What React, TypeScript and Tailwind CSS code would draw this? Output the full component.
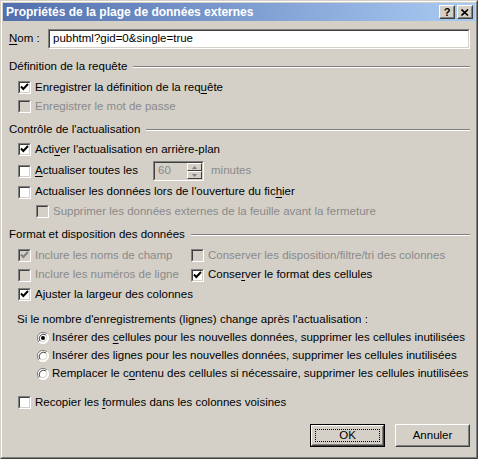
import React from "react";

const sunken =
  "border border-t-[#808080] border-l-[#808080] border-r-white border-b-white";
const sunkenInner =
  "border border-t-[#404040] border-l-[#404040] border-r-[#d4d0c8] border-b-[#d4d0c8]";
const raised =
  "border border-t-white border-l-white border-r-[#404040] border-b-[#404040]";
const raisedInner =
  "border border-t-[#d4d0c8] border-l-[#d4d0c8] border-r-[#808080] border-b-[#808080]";

const Check = ({ checked, disabled }: { checked?: boolean; disabled?: boolean }) => (
  <div className={`w-[13px] h-[13px] shrink-0 ${sunken}`}>
    <div className={`w-full h-full ${sunkenInner} ${disabled ? "bg-[#d4d0c8]" : "bg-white"} flex items-center justify-center`}>
      {checked && (
        <svg width="9" height="9" viewBox="0 0 9 9">
          <path d="M1 3.5 L3.3 6 L8 1" fill="none" stroke={disabled ? "#808080" : "#000"} strokeWidth="1.9" />
        </svg>
      )}
    </div>
  </div>
);

const Radio = ({ checked }: { checked?: boolean }) => (
  <svg width="12" height="12" viewBox="0 0 12 12" className="shrink-0">
    <circle cx="6" cy="6" r="5.5" fill="#fff" />
    <path d="M10 2 A5.5 5.5 0 0 0 2 10" fill="none" stroke="#808080" strokeWidth="1" />
    <path d="M2 10 A5.5 5.5 0 0 0 10 2" fill="none" stroke="#fff" strokeWidth="1" />
    <path d="M9 3 A4.3 4.3 0 0 0 3 9" fill="none" stroke="#404040" strokeWidth="1" />
    <path d="M3 9 A4.3 4.3 0 0 0 9 3" fill="none" stroke="#d4d0c8" strokeWidth="1" />
    {checked && <circle cx="6" cy="6" r="2" fill="#000" />}
  </svg>
);

const U = ({ children }: { children: React.ReactNode }) => <span className="underline underline-offset-2">{children}</span>;

const Group = ({ title }: { title: string }) => (
  <div className="flex items-center h-4 pl-[6px]">
    <span>{title}</span>
    <div className="flex-1 ml-[6px] border-t border-t-[#808080] border-b border-b-white" />
  </div>
);

const Row = ({
  checked,
  disabled,
  indent = "pl-[15px]",
  h = "h-[19px]",
  children,
}: {
  checked?: boolean;
  disabled?: boolean;
  indent?: string;
  h?: string;
  children: React.ReactNode;
}) => (
  <div className={`flex items-center gap-1 whitespace-nowrap ${indent} ${h} ${disabled ? "text-[#8a8a8a]" : ""}`}>
    <Check checked={checked} disabled={disabled} />
    <span>{children}</span>
  </div>
);

const RadioRow = ({ checked, children }: { checked?: boolean; children: React.ReactNode }) => (
  <div className="flex items-center gap-[3px] pl-[34px] h-[18px] whitespace-nowrap">
    <Radio checked={checked} />
    <span>{children}</span>
  </div>
);

export default function App() {
  return (
    <div className="w-[478px] h-[459px] bg-[#d4d0c8] border border-t-[#d4d0c8] border-l-[#d4d0c8] border-r-[#404040] border-b-[#404040] font-['Liberation_Sans',sans-serif] text-[11.5px] text-black">
      <div className="w-full h-full border border-t-white border-l-white border-r-[#808080] border-b-[#808080] p-px flex flex-col">
        <div className="h-[18px] flex items-center justify-between bg-gradient-to-r from-[#526fae] to-[#a9cbf2] pl-[3px] pr-[2px]">
          <span className="text-white font-bold text-[12px]">Propriétés de la plage de données externes</span>
          <div className="flex gap-[2px]">
            <div className={`w-4 h-[14px] bg-[#d4d0c8] ${raised}`}>
              <div className={`w-full h-full ${raisedInner} flex items-center justify-center font-bold text-[11px] leading-none`}>?</div>
            </div>
            <div className={`w-4 h-[14px] bg-[#d4d0c8] ${raised}`}>
              <div className={`w-full h-full ${raisedInner} flex items-center justify-center`}>
                <svg width="8" height="7" viewBox="0 0 8 7">
                  <path d="M0.5 0.5 L7 6.5 M7 0.5 L0.5 6.5" stroke="#000" strokeWidth="1.6" />
                </svg>
              </div>
            </div>
          </div>
        </div>

        <div className="flex flex-col pr-[5px]">
          <div className="flex items-center mt-2 h-5 pl-[6px]">
            <span className="w-[39px]"><U>N</U>om :</span>
            <div className={`flex-1 h-5 ${sunken}`}>
              <div className={`w-full h-full ${sunkenInner} bg-white flex items-center px-[3px]`}>pubhtml?gid=0&amp;single=true</div>
            </div>
          </div>

          <div className="mt-[10px]"><Group title="Définition de la requête" /></div>
          <div className="mt-[3px]">
            <Row checked>Enregistrer la définition de la req<U>u</U>ête</Row>
          </div>
          <Row disabled>Enregistrer le mot de passe</Row>

          <div className="mt-[6px]"><Group title="Contrôle de l'actualisation" /></div>
          <div className="mt-[2px]">
            <Row checked>Acti<U>v</U>er l'actualisation en arrière-plan</Row>
          </div>
          <div className="flex items-center gap-1 pl-[15px] h-[22px] mt-px whitespace-nowrap">
            <Check />
            <span className="w-[114px]"><U>A</U>ctualiser toutes les</span>
            <div className={`w-[51px] h-5 ${sunken}`}>
              <div className={`w-full h-full ${sunkenInner} flex items-center`}>
                <span className="flex-1 pl-[3px] text-[#8a8a8a]">60</span>
                <div className="w-[15px] h-full flex flex-col">
                  <div className={`flex-1 bg-[#d4d0c8] ${raised} flex items-center justify-center`}>
                    <svg width="5" height="3" viewBox="0 0 5 3"><path d="M2.5 0 L5 3 L0 3Z" fill="#808080" /></svg>
                  </div>
                  <div className={`flex-1 bg-[#d4d0c8] ${raised} flex items-center justify-center`}>
                    <svg width="5" height="3" viewBox="0 0 5 3"><path d="M0 0 L5 0 L2.5 3Z" fill="#808080" /></svg>
                  </div>
                </div>
              </div>
            </div>
            <span className="ml-[3px] text-[#8a8a8a]">minutes</span>
          </div>
          <Row h="h-5">Actualiser les données lors de l'ouverture du fic<U>h</U>ier</Row>
          <Row disabled indent="pl-[33px]">Supprimer les données externes de la feuille avant la fermeture</Row>

          <div className="mt-[6px]"><Group title="Format et disposition des données" /></div>
          <div className="grid grid-cols-[188px_1fr] mt-[3px]">
            <Row checked disabled>Inclure les noms de champ</Row>
            <Row disabled indent="pl-0">Conserver les disposition/filtre/tri des colonnes</Row>
            <Row disabled h="h-5">Inclure les numéros de ligne</Row>
            <Row checked indent="pl-0" h="h-5">Conse<U>r</U>ver le format des cellules</Row>
            <Row checked>A<U>j</U>uster la largeur des colonnes</Row>
          </div>

          <div className="mt-[8px] h-4 flex items-center pl-[14px] whitespace-nowrap">
            Si le nombre d'enregistrements (lignes) change après l'actualisation :
          </div>
          <div className="mt-px">
            <RadioRow checked>Insérer des <U>c</U>ellules pour les nouvelles données, supprimer les cellules inutilisées</RadioRow>
            <RadioRow>Insérer des lignes pour les nouvelles données, supprimer les cellules inutilisées</RadioRow>
            <RadioRow>Remplacer le c<U>o</U>ntenu des cellules si nécessaire, supprimer les cellules inutilisées</RadioRow>
          </div>

          <div className="mt-[10px]">
            <Row>Recopier les <U>f</U>ormules dans les colonnes voisines</Row>
          </div>

          <div className="mt-[12px] flex justify-end gap-[10px]">
            <div className="w-[75px] h-[23px] border border-black">
              <div className={`w-full h-full ${raised}`}>
                <div className={`w-full h-full ${raisedInner} p-[2px]`}>
                  <div className="w-full h-full border border-dotted border-black flex items-center justify-center">OK</div>
                </div>
              </div>
            </div>
            <div className={`w-[75px] h-[23px] border border-t-white border-l-white border-r-[#404040] border-b-[#404040]`}>
              <div className={`w-full h-full ${raisedInner} flex items-center justify-center`}>Annuler</div>
            </div>
          </div>
        </div>
      </div>
    </div>
  );
}
